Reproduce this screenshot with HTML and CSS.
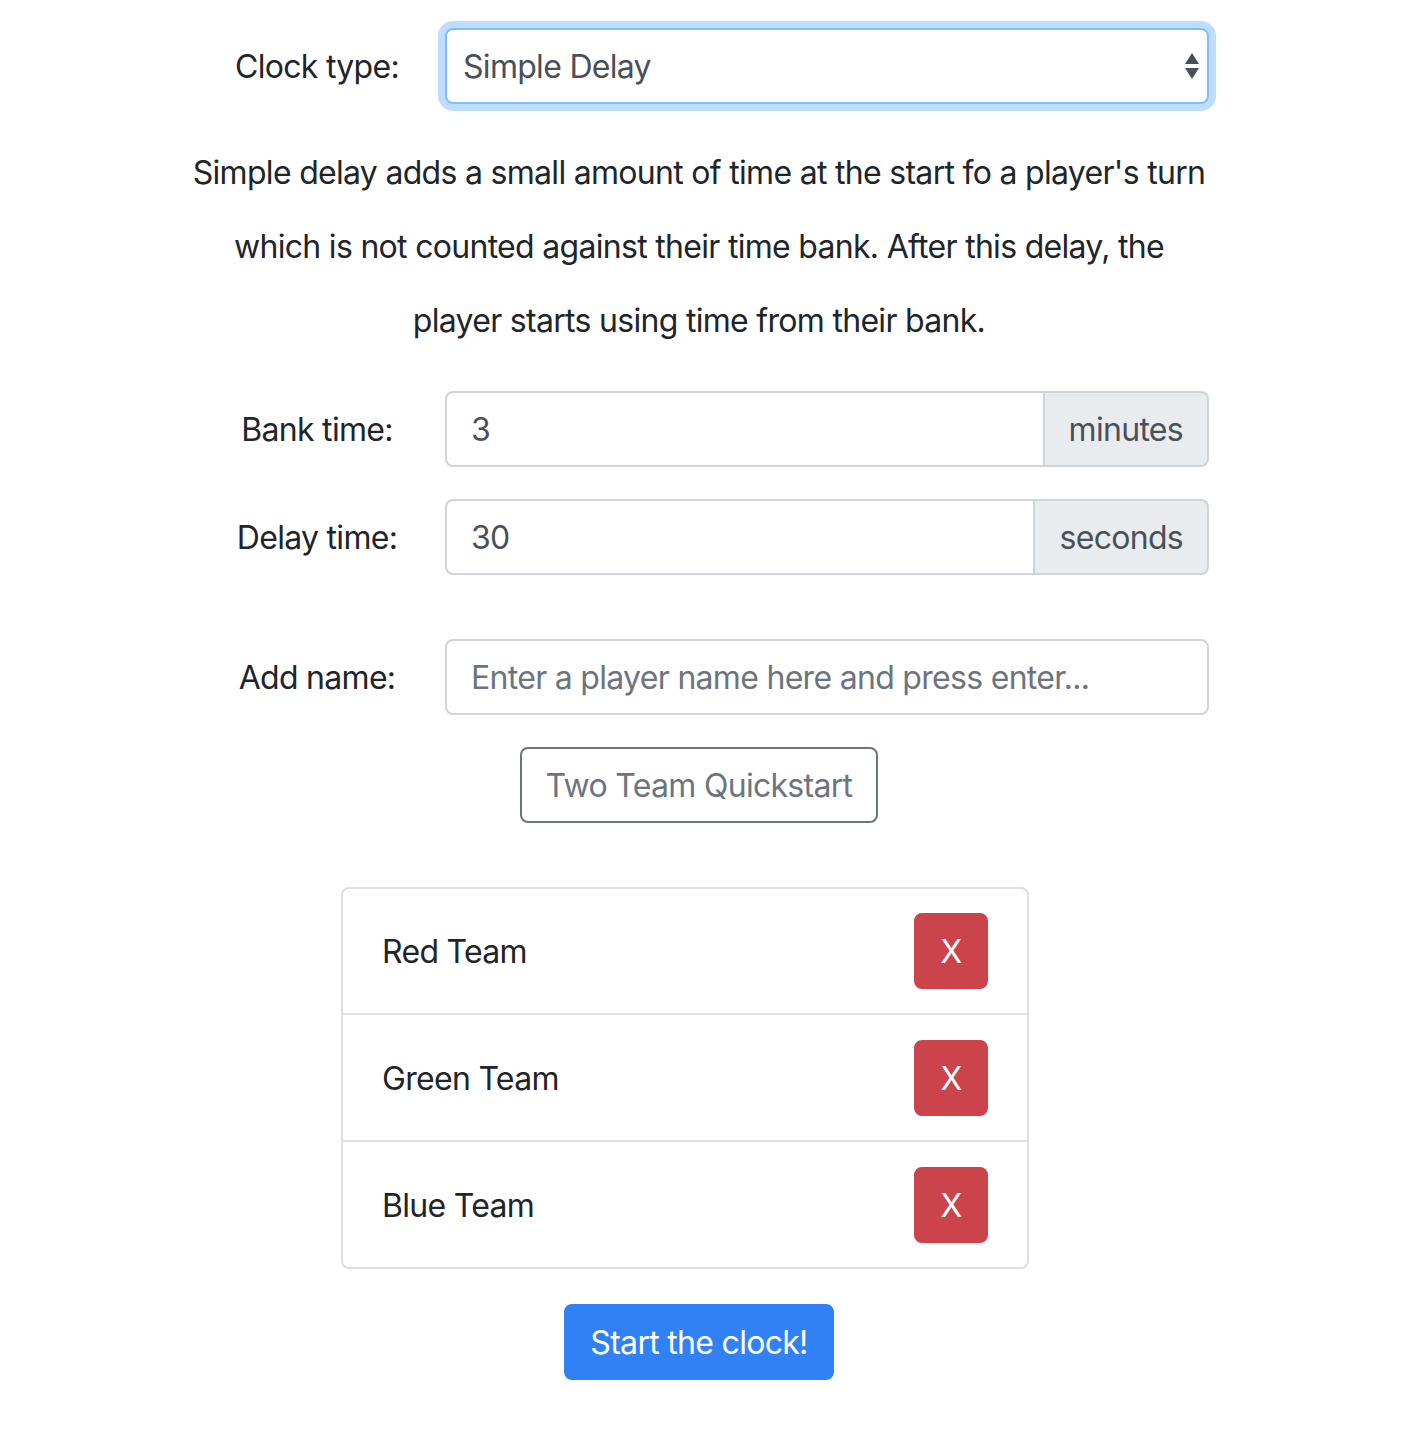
FILE: index.html
```html
<!DOCTYPE html>
<html lang="en">
<head>
<meta charset="utf-8">
<title>Clock setup</title>
<link rel="stylesheet" href="styles.css">
</head>
<body>
<main class="page">
  <div class="form-row">
    <label class="form-label" for="clock-type">Clock type:</label>
    <div class="select-wrap">
      <select id="clock-type" class="form-select">
        <option>Simple Delay</option>
      </select>
      <svg class="select-arrows" width="16" height="30" viewBox="0 0 16 30" aria-hidden="true">
        <path d="M8 2 L15 13 L1 13 Z" fill="#4a4f55"/>
        <path d="M1 17 L15 17 L8 28 Z" fill="#4a4f55"/>
      </svg>
    </div>
  </div>

  <p class="description">Simple delay adds a small amount of time at the start fo a player's turn which is not counted against their time bank. After this delay, the player starts using time from their bank.</p>

  <div class="form-row">
    <label class="form-label" for="bank">Bank time:</label>
    <div class="input-group">
      <input id="bank" class="form-control grouped" type="text" value="3">
      <span class="input-addon">minutes</span>
    </div>
  </div>

  <div class="form-row spaced">
    <label class="form-label" for="delay">Delay time:</label>
    <div class="input-group">
      <input id="delay" class="form-control grouped" type="text" value="30">
      <span class="input-addon">seconds</span>
    </div>
  </div>

  <div class="form-row">
    <label class="form-label" for="name">Add name:</label>
    <input id="name" class="form-control" type="text" placeholder="Enter a player name here and press enter...">
  </div>

  <div class="center-row">
    <button class="btn btn-outline">Two Team Quickstart</button>
  </div>

  <div class="list-wrap">
    <ul class="list-group">
      <li class="list-item"><span>Red Team</span><button class="btn btn-danger">X</button></li>
      <li class="list-item"><span>Green Team</span><button class="btn btn-danger">X</button></li>
      <li class="list-item"><span>Blue Team</span><button class="btn btn-danger">X</button></li>
    </ul>
  </div>

  <div class="center-row start-row">
    <button class="btn btn-primary">Start the clock!</button>
  </div>
</main>
</body>
</html>
```

FILE: styles.css
```css
* { box-sizing: border-box; }

html, body {
  margin: 0;
  padding: 0;
  background: #ffffff;
}

body {
  font-family: Inter, "Noto Sans", "Liberation Sans", sans-serif;
  font-size: 32px;
  letter-spacing: -0.7px;
  color: #212529;
}

.page {
  width: 1050px;
  margin-left: 174px;
  padding: 28px 15px 40px;
}

.form-row {
  display: grid;
  grid-template-columns: 256px 1fr;
  align-items: center;
  margin-bottom: 32px;
}

.form-row.spaced {
  margin-bottom: 64px;
}

.form-label {
  text-align: center;
  font-size: 32px;
  color: #212529;
}

.select-wrap {
  position: relative;
}

.form-select {
  display: block;
  width: 100%;
  height: 76px;
  padding: 0 50px 0 16px;
  font-family: inherit;
  font-size: 32px;
  letter-spacing: inherit;
  color: #495057;
  background: #ffffff;
  border: 2px solid #80bdff;
  border-radius: 8px;
  box-shadow: 0 0 0 7px rgba(0, 123, 255, 0.25);
  outline: none;
  appearance: none;
  -webkit-appearance: none;
}

.select-arrows {
  position: absolute;
  right: 9px;
  top: 23px;
  pointer-events: none;
}

.description {
  margin: 32px 0 33px;
  line-height: 74px;
  text-align: center;
  font-size: 32px;
  color: #212529;
}

.input-group {
  display: flex;
}

.form-control {
  display: block;
  width: 100%;
  height: 76px;
  padding: 0 24px;
  font-family: inherit;
  font-size: 32px;
  letter-spacing: inherit;
  color: #495057;
  background: #ffffff;
  border: 2px solid #ced4da;
  border-radius: 8px;
  outline: none;
}

.form-control::placeholder {
  color: #6c757d;
}

.form-control.grouped {
  flex: 1;
  min-width: 0;
  border-top-right-radius: 0;
  border-bottom-right-radius: 0;
}

.input-addon {
  display: flex;
  align-items: center;
  padding: 0 24px;
  height: 76px;
  font-size: 32px;
  color: #495057;
  background: #e9ecef;
  border: 2px solid #ced4da;
  border-left: none;
  border-radius: 0 8px 8px 0;
}

.center-row {
  display: flex;
  justify-content: center;
  margin-bottom: 64px;
}

.btn {
  font-family: inherit;
  font-size: 32px;
  letter-spacing: inherit;
  height: 76px;
  padding: 0 24px;
  border: 2px solid transparent;
  border-radius: 8px;
  background: transparent;
  cursor: pointer;
}

.btn-outline {
  color: #6c757d;
  border-color: #6c757d;
}

.btn-danger {
  width: 74px;
  padding: 0;
  color: #ffffff;
  background: #cb444b;
  border-color: #cb444b;
}

.btn-primary {
  color: #ffffff;
  background: #3181f6;
  border-color: #3181f6;
}

.list-wrap {
  display: flex;
  justify-content: center;
  padding-right: 28px;
}

.list-group {
  width: 688px;
  margin: 0;
  padding: 0;
  list-style: none;
  border: 2px solid #dfdfdf;
  border-radius: 8px;
}

.list-item {
  display: flex;
  align-items: center;
  justify-content: space-between;
  padding: 25px 39px 24px 39px;
  border-bottom: 2px solid #dfdfdf;
}

.list-item:first-child {
  padding-top: 24px;
}

.list-item:last-child {
  border-bottom: none;
  padding-bottom: 24px;
}

.start-row {
  margin-top: 35px;
  margin-bottom: 0;
}
```
